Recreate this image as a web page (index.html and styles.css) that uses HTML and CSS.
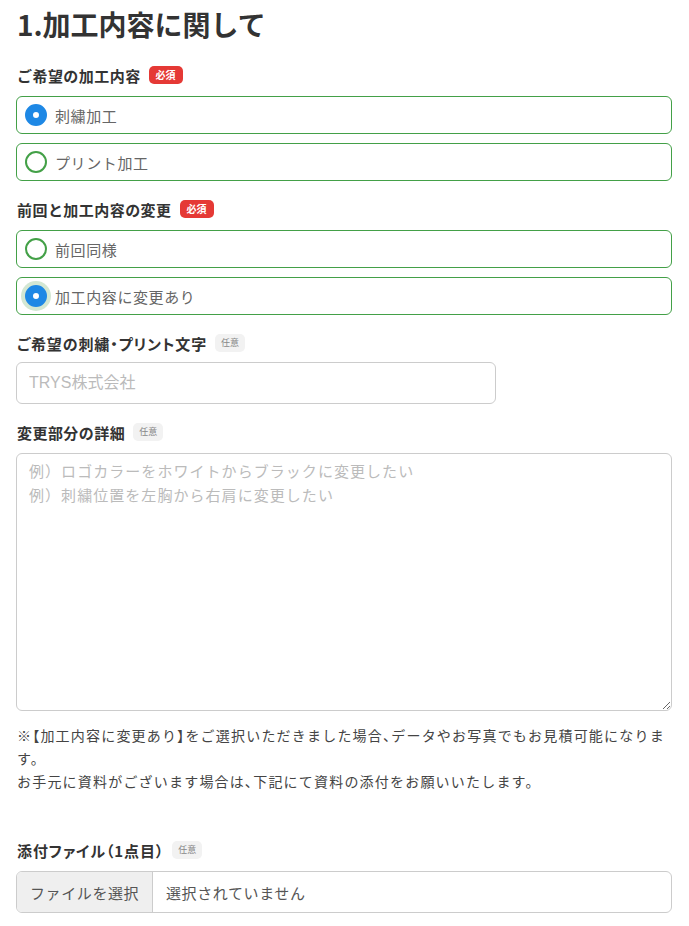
FILE: index.html
```html
<!DOCTYPE html>
<html lang="ja">
  <head>
    <meta charset="UTF-8" />
    <meta name="viewport" content="width=device-width, initial-scale=1.0" />
    <title>加工内容に関して</title>
    <link rel="stylesheet" href="styles.css">
  </head>
  <body>
    <form class="order-form">
      <h1>1.加工内容に関して</h1>

      <div class="field">
        <div class="field-label"><span>ご希望の加工内容</span> <span class="badge required">必須</span></div>
        <div class="choices">
          <label class="choice">
            <input type="radio" name="kind" checked />
            <span class="radio"></span>
            <span class="choice-text">刺繍加工</span>
          </label>
          <label class="choice">
            <input type="radio" name="kind" />
            <span class="radio"></span>
            <span class="choice-text">プリント加工</span>
          </label>
        </div>
      </div>

      <div class="field">
        <div class="field-label"><span>前回と加工内容の変更</span> <span class="badge required">必須</span></div>
        <div class="choices">
          <label class="choice">
            <input type="radio" name="change" />
            <span class="radio"></span>
            <span class="choice-text">前回同様</span>
          </label>
          <label class="choice focused">
            <input type="radio" name="change" checked />
            <span class="radio"></span>
            <span class="choice-text">加工内容に変更あり</span>
          </label>
        </div>
      </div>

      <div class="field">
        <div class="field-label"><span class="palt">ご希望の刺繍・プリント文字</span> <span class="badge optional">任意</span></div>
        <input class="text-input" type="text" placeholder="TRYS株式会社" />
      </div>

      <div class="field">
        <div class="field-label"><span>変更部分の詳細</span> <span class="badge optional">任意</span></div>
        <textarea class="text-area" placeholder="例）ロゴカラーをホワイトからブラックに変更したい&#10;例）刺繍位置を左胸から右肩に変更したい"></textarea>
      </div>

      <p class="note">
        ※<span class="narrow">【</span>加工内容に変更あり<span class="narrow">】</span>をご選択いただきました場合<span class="narrow">、</span>データやお写真でもお見積可能になります。<br />
        お手元に資料がございます場合は<span class="narrow">、</span>下記にて資料の添付をお願いいたします。
      </p>

      <div class="field field-file">
        <div class="field-label"><span class="palt">添付ファイル（1点目）</span> <span class="badge optional">任意</span></div>
        <label class="file-box">
          <span class="file-button">ファイルを選択</span>
          <span class="file-name">選択されていません</span>
        </label>
      </div>
    </form>
  </body>
</html>
```

FILE: styles.css
```css
body {
  margin: 0;
  font-family: "Noto Sans CJK JP", "Noto Sans", sans-serif;
  color: #333;
  background: #fff;
}

.order-form {
  padding: 4px 17px 0 16px;
}

h1 {
  margin: 0;
  padding-left: 1px;
  font-size: 28px;
  line-height: 40px;
  font-weight: 700;
  color: #333;
}

.field {
  margin-top: 18px;
}

.order-form h1 + .field {
  margin-top: 21px;
}

.field-label {
  display: flex;
  align-items: center;
  gap: 8px;
  height: 20px;
  margin-bottom: 11px;
  padding-left: 1px;
  font-size: 15px;
  font-weight: 700;
  letter-spacing: 0.03em;
  color: #333;
}

.field-label .palt {
  font-feature-settings: "palt";
  letter-spacing: 0.06em;
}

.badge {
  display: inline-block;
  height: 18px;
  line-height: 18px;
  padding: 0 7px;
  border-radius: 5px;
  font-size: 10px;
  font-weight: 700;
  letter-spacing: 0;
}

.badge.required {
  background: #e53935;
  color: #fff;
}

.badge.optional {
  padding: 0 6px;
  background: #f2f2f2;
  color: #888;
  font-size: 9px;
  font-weight: 400;
}

.choices {
  display: flex;
  flex-direction: column;
  gap: 9px;
}

.choice {
  display: flex;
  align-items: center;
  gap: 8px;
  height: 38px;
  box-sizing: border-box;
  padding-left: 8px;
  border: 1px solid #43a047;
  border-radius: 6px;
}

.choice input {
  display: none;
}

.radio {
  width: 22px;
  height: 22px;
  box-sizing: border-box;
  border: 2px solid #43a047;
  border-radius: 50%;
  background: #fff;
}

.choice input:checked + .radio {
  border: 8px solid #1e88e5;
  background: #fff;
}

.choice.focused .radio {
  box-shadow: 0 0 0 4px #d3e7d3;
}

.choice-text {
  font-size: 15px;
  letter-spacing: 0.04em;
  color: #666;
}

.text-input,
.text-area {
  display: block;
  box-sizing: border-box;
  border: 1px solid #ccc;
  border-radius: 6px;
  font-family: inherit;
  font-size: 15px;
  letter-spacing: 0.07em;
  color: #333;
  padding: 0 12px;
  outline: none;
}

.text-input {
  width: 480px;
  height: 42px;
  margin-top: -2px;
  font-family: "Liberation Sans", "Noto Sans CJK JP", sans-serif;
  font-size: 16px;
  letter-spacing: 0;
}

.text-area {
  width: 100%;
  height: 258px;
  padding-top: 5px;
  line-height: 24px;
  resize: vertical;
}

.text-input::placeholder,
.text-area::placeholder {
  color: #bbb;
}

.note {
  margin: 13px 0 0;
  padding-left: 1px;
  font-size: 14px;
  line-height: 23px;
  letter-spacing: 1.2px;
  color: #444;
}

.note .narrow {
  font-feature-settings: "palt";
}

.field-file {
  margin-top: 47px;
}

.file-box {
  display: flex;
  align-items: center;
  height: 42px;
  box-sizing: border-box;
  border: 1px solid #ccc;
  border-radius: 6px;
  overflow: hidden;
  font-size: 15px;
  letter-spacing: 0.04em;
  color: #555;
}

.file-button {
  display: flex;
  align-items: center;
  width: 136px;
  height: 100%;
  box-sizing: border-box;
  padding-left: 13px;
  background: #efefef;
  border-right: 1px solid #ccc;
}

.file-name {
  padding-left: 13px;
}
```
